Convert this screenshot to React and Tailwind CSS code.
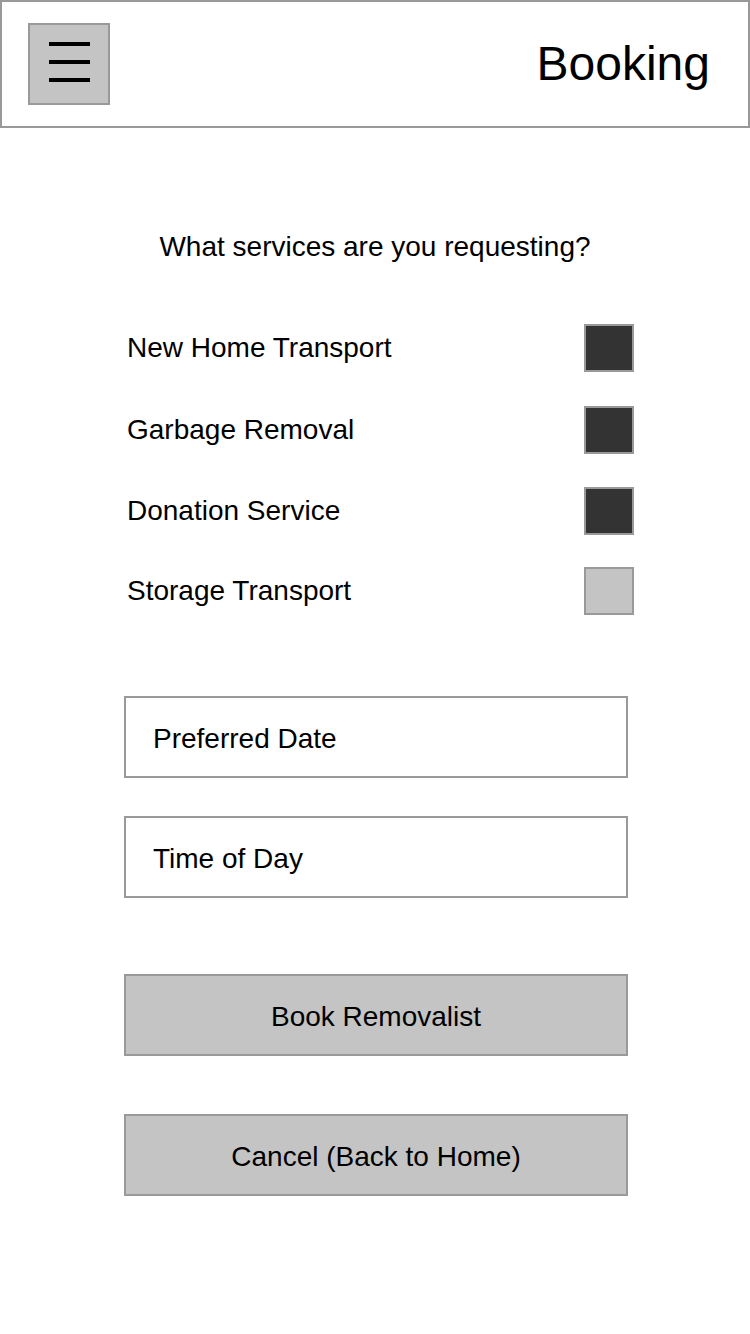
import React from 'react';

const services = [
  { name: 'New Home Transport', checked: true, h: 'h-[82px]' },
  { name: 'Garbage Removal', checked: true, h: 'h-[82px]' },
  { name: 'Donation Service', checked: true, h: 'h-[80px]' },
  { name: 'Storage Transport', checked: false, h: 'h-[80px]' },
];

const App = () => {
  return (
    <div className="w-[750px] h-[1334px] bg-white text-black font-['Liberation_Sans',Arial,sans-serif]">
      {/* Header */}
      <div className="h-[128px] border-2 border-[#999999] flex items-center justify-between pl-[26px] pr-[38px]">
        <button className="w-[82px] h-[82px] bg-[#c4c4c4] border-2 border-[#999999] flex flex-col items-center justify-center gap-[14px] pb-[5px]">
          <span className="block w-[41px] h-[4px] bg-black" />
          <span className="block w-[41px] h-[4px] bg-black" />
          <span className="block w-[41px] h-[4px] bg-black" />
        </button>
        <h1 className="text-[48px] leading-none">Booking</h1>
      </div>

      <p className="mt-[104px] text-center text-[28px] leading-[30px]">What services are you requesting?</p>

      {/* Service checkboxes */}
      <div className="mt-[45px] pl-[127px] pr-[116px]">
        {services.map((s) => (
          <div key={s.name} className={`flex items-center justify-between ${s.h}`}>
            <span className="text-[28px] leading-none">{s.name}</span>
            <span
              className={`block w-[50px] h-[48px] border-2 border-[#999999] ${s.checked ? 'bg-[#333333]' : 'bg-[#c4c4c4]'}`}
            />
          </div>
        ))}
      </div>

      {/* Inputs */}
      <div className="mt-[65px] pl-[124px] pr-[122px] flex flex-col gap-[38px]">
        <div className="h-[82px] border-2 border-[#999999] flex items-center px-[27px] pt-[4px] text-[28px]">Preferred Date</div>
        <div className="h-[82px] border-2 border-[#999999] flex items-center px-[27px] pt-[4px] text-[28px]">Time of Day</div>
      </div>

      {/* Actions */}
      <div className="mt-[76px] pl-[124px] pr-[122px] flex flex-col gap-[58px]">
        <button className="h-[82px] bg-[#c4c4c4] border-2 border-[#999999] pt-[4px] text-[28px]">Book Removalist</button>
        <button className="h-[82px] bg-[#c4c4c4] border-2 border-[#999999] pt-[4px] text-[28px]">Cancel (Back to Home)</button>
      </div>
    </div>
  );
};

export default App;
